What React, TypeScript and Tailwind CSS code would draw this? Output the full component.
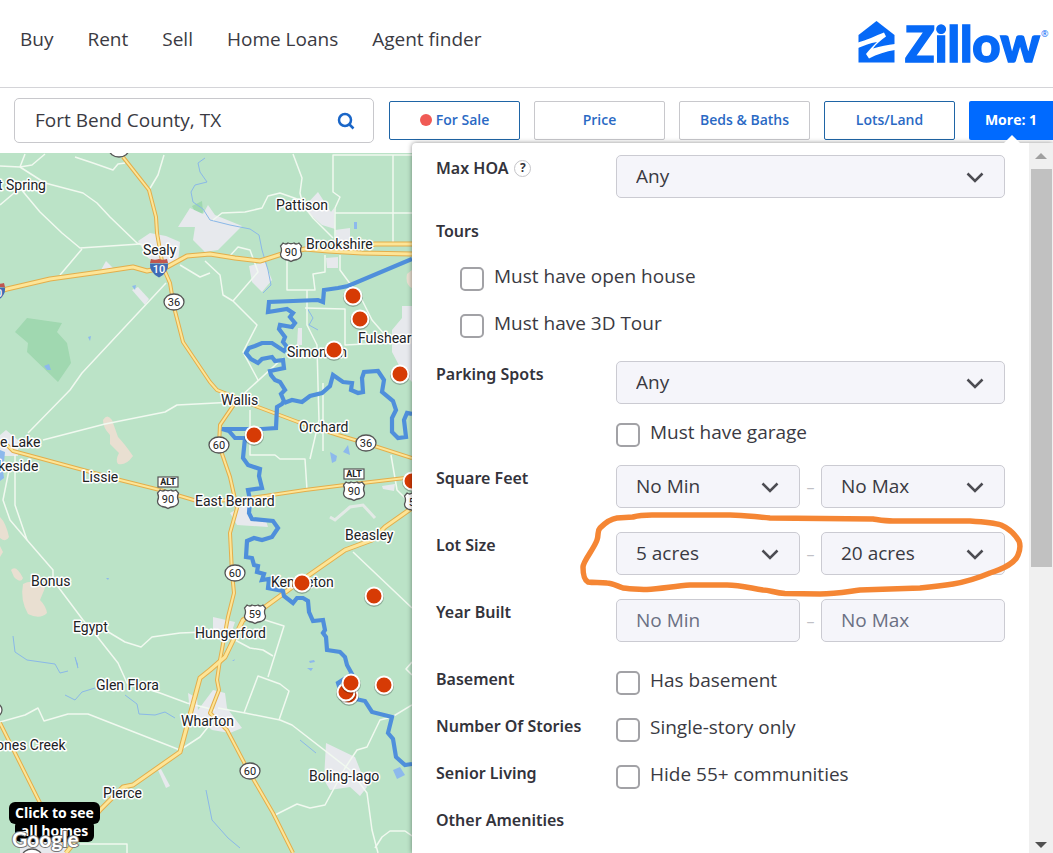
import { ReactNode, useState } from "react";
import clsx from "clsx";

const NAV_LINKS = ["Buy", "Rent", "Sell", "Home Loans", "Agent finder"];

const HIGHWAYS = [
  "M0 291 L7 289 L50 279 L100 272 L133 267 L147 271 L167 267 L187 256 L210 254 L235 258 L260 261 L282 254 L305 249 L328 251 L362 253 L412 254",
  "M350 250 L375 244 L412 244",
  "M412 508 L385 527 L372 540 L345 550 L302 580 L265 607 L243 620 L225 657 L210 670 L200 678 L180 752 L133 785 L123 787 L100 810 L66 853",
];

const ROADS = [
  "M123 157 L149 190 L156 217 L157 233 L163 267 L170 283 L174 307 L183 342 L210 382 L217 390 L237 398 L258 407 L298 422 L338 435 L365 443 L412 458",
  "M235 403 L220 425 L219 445 L230 477 L237 508 L230 533 L232 573 L234 593 L228 617 L220 660 L217 680 L219 690 L210 713 L227 730 L248 770 L273 813 L293 853",
  "M7 445 L13 451 L120 480 L160 490 L197 501 L235 500 L265 496 L305 490 L345 485 L405 478",
  "M0 723 L40 803 L65 845",
];

const STREETS = [
  "M0 166 L20 167 L45 183 L83 193 L97 203 L110 217 L137 243 L155 249",
  "M20 167 L25 154 M20 167 L32 165 L45 154 M75 157 L93 163 L113 170 L118 164 L125 163",
  "M0 205 L20 188 L40 212 L62 233 L80 248 L140 244 M82 249 L60 275",
  "M164 155 L158 175 L149 190 M180 265 L200 277 L210 273",
  "M166 283 L82 373 L70 390 L28 433",
  "M293 154 L302 178 L300 193 L303 205 L313 218 L333 238",
  "M213 220 L222 213 L245 212 L262 208 L268 196 L280 193 L300 200",
  "M412 155 L333 155 L333 192 L340 197 L335 208 L335 240 M335 213 L412 213 M393 155 L393 243",
  "M287 258 L287 290 L313 290 M325 255 L325 272 L313 274 L315 290 L307 290 L307 325 L317 345 L318 385 L319 420 L310 459",
  "M340 255 L340 270 L362 300 L372 320 L385 335 M305 308 L345 309 L345 345 L384 343",
  "M205 261 L220 275 L223 295 L233 301 L257 325 L243 352 L258 380",
  "M233 301 L258 272 L250 250 L238 247 L228 258 M283 358 L250 388 L237 400",
  "M43 440 L105 424 L165 412 L177 405 L235 402",
  "M9 470 L3 500 L10 520 L27 540 L53 570 L53 580 L83 620 L92 630 L118 663 L127 683 L160 693 L187 703 L215 710",
  "M15 455 L15 505 L27 540",
  "M105 630 L125 642 L141 647 L152 637 L180 633 L205 632",
  "M0 722 L25 715 L38 708 L44 721 L68 714 L88 714 L180 750 L200 737 L212 722",
  "M250 410 L250 455 L275 455 L280 459 L305 459 L307 490 M323 383 L323 451",
  "M353 552 L412 608 M391 455 L397 490 L412 505",
  "M235 640 L250 648 L263 650 L273 656 M265 620 L284 626 L268 677",
  "M244 713 L258 676 L280 684 L289 691 L279 720",
  "M218 708 L245 713 L280 720 L292 725 L350 770 L367 793 L372 830 L378 853",
  "M412 705 L392 717 L380 720 L367 747 L357 750 L345 768 L325 805 L310 808 L297 804 L275 815",
  "M375 848 L382 837 L390 831 L405 831 L412 836 M80 844 L127 844 L127 853 M412 662 L406 669 L412 675",
];

const RIVERS = [
  "M205 158 L198 163 L200 172 L207 182 L195 185 L191 192 L193 202 L203 209 L210 220 L230 225 L250 229 L259 235 L262 250 L268 270 L271 285 L263 293",
  "M13 636 L15 652 L27 660 L55 664 L60 673 L68 671 M75 657 L78 668 M65 695 L75 700 L82 692 L95 688 M125 695 L137 704 L139 714 L155 715 L165 712 L175 718",
  "M307 308 L313 318 L309 325 L318 330 M206 790 L212 820 L228 838 L240 848 M300 740 L316 753",
];

const TOWNS = [
  "178,227 190,208 203,214 208,205 215,215 242,226 218,250 205,252 193,240 195,227",
  "138,241 150,233 166,236 180,242 178,262 160,264 148,258",
  "101,270 106,261 113,268",
  "132,290 138,287 149,299 145,305",
  "303,208 318,192 331,212 334,208 335,229 322,225",
  "335,230 350,228 350,240 337,242",
  "326,258 338,257 338,268 327,268",
  "249,266 265,262 272,280 262,292 252,282",
  "298,328 302,328 302,345 297,345",
  "392,330 402,318 402,306 412,306 412,382 402,371 392,352",
  "230,513 247,504 254,518 266,521 268,527 237,525",
  "213,617 235,622 230,637 213,633",
  "188,693 197,698 198,710 213,690 225,693 227,708 242,728 230,733 212,730 190,712",
  "326,743 355,757 367,787 360,796 350,787 330,790 324,780",
  "158,770 161,769 170,786 166,788",
  "0,435 6,430 18,440 18,456 0,456",
  "20,835 60,840 70,853 20,853",
  "382,486 395,484 394,491 383,489",
];

const LABELS: [string, number, number][] = [
  ["t Spring", -2, 190],
  ["Pattison", 276, 210],
  ["Brookshire", 306, 249],
  ["Sealy", 143, 255],
  ["Simonton", 287, 357],
  ["Fulshear", 358, 343],
  ["Wallis", 221, 405],
  ["Orchard", 299, 432],
  ["e Lake", 0, 447],
  ["keside", -2, 471],
  ["Lissie", 82, 482],
  ["East Bernard", 195, 506],
  ["Beasley", 345, 540],
  ["Kendleton", 271, 587],
  ["Bonus", 31, 586],
  ["Egypt", 73, 632],
  ["Hungerford", 195, 638],
  ["Glen Flora", 96, 690],
  ["Wharton", 181, 726],
  ["ones Creek", -4, 750],
  ["Pierce", 103, 798],
  ["Boling-Iago", 309, 781],
];

const PINS = [
  [353, 296],
  [360, 319],
  [334, 350],
  [400, 374],
  [254, 435],
  [412, 481],
  [302, 583],
  [374, 596],
  [384, 685],
  [349, 695],
  [346, 692],
  [351, 683],
];

function StateShield({ x, y, label }: { x: number; y: number; label?: string }) {
  return (
    <g>
      <ellipse cx={x} cy={y} rx="10" ry="8" fill="#fff" stroke="#555" strokeWidth="1.3" />
      <text x={x} y={y + 4} fontSize="11" textAnchor="middle">{label}</text>
    </g>
  );
}

function UsShield({ x, y, label, alt }: { x: number; y: number; label: string; alt?: boolean }) {
  return (
    <g>
      {alt && (
        <>
          <rect x={x - 10} y={y - 22} width="20" height="10" fill="#fff" stroke="#555" strokeWidth="1.2" />
          <text x={x} y={y - 14} fontSize="9" fontWeight="700" textAnchor="middle">ALT</text>
        </>
      )}
      <path
        transform={`translate(${x} ${y})`}
        d="M-8 -9 Q-5 -7 -3 -9 Q0 -7.500 3 -9 Q5 -7 8 -9 L10.500 -6 Q8.500 -2 10.500 2 Q10.500 6 6 7.500 Q2 8 0 9.500 Q-2 8 -6 7.500 Q-10.500 6 -10.500 2 Q-8.500 -2 -10.500 -6 Z"
        fill="#fff"
        stroke="#555"
        strokeWidth="1.3"
      />
      <text x={x} y={y + 4} fontSize="11" textAnchor="middle">{label}</text>
    </g>
  );
}

function InterstateShield({ x, y }: { x: number; y: number }) {
  return (
    <g transform={`translate(${x} ${y})`}>
      <path d="M-8 -9 Q-4 -7.500 0 -9 Q4 -7.500 8 -9 L9 -5 H-9 Z" fill="#c0564f" />
      <path d="M-9 -4.500 H9 Q10 4 0 9.500 Q-10 4 -9 -4.500 Z" fill="#3f6bb5" />
      <text y="5" fontSize="11" fontWeight="500" textAnchor="middle" className="fill-white">10</text>
    </g>
  );
}

function MapView() {
  return (
    <svg
      viewBox="0 153 412 700"
      preserveAspectRatio="xMinYMin slice"
      className="size-full font-[Roboto,sans-serif]"
      fill="none"
      role="img"
      aria-label="Map of Fort Bend County"
    >
      <rect y="153" width="412" height="700" fill="#bbe3c7" />
      <polygon points="27,318 48,321 62,323 57,332 67,343 71,363 58,382 27,352 28,343 15,332" fill="#a0d8b0" />
      <polygon points="192,206 202,201 203,212 198,218" fill="#a0d8b0" />
      <g fill="#e9dfd1">
        <path d="M103 420 Q107 413 112 420 L118 437 Q124 443 133 456 Q126 466 118 464 Q115 460 119 453 L110 444 L110 435 Q103 428 103 420Z" />
        <path d="M11 570 Q16 564 23 578 Q21 584 14 577Z M23 584 Q34 578 45 588 L40 600 Q46 606 47 613 Q40 620 28 614 Q20 600 23 584Z" />
        <path d="M0 517 Q6 523 9 537 Q6 543 0 538Z M0 546 L3 552 L0 557Z M407 274 Q412 270 412 270 V288 Q405 285 407 274Z" />
      </g>
      <g fill="#e7e9ed">
        {TOWNS.map((points) => (
          <polygon key={points} points={points} />
        ))}
      </g>
      <g fill="#8db9ec">
        <path d="M0 450 L5 452 L4 462 L2 464 L4 478 L0 481Z" />
        <path d="M330 452 L337 456 L336 461 L332 463Z M343 452 L348 445 L350 455Z M354 222 H357 V229 H354Z" />
        <path d="M44 366 L49 364 L51 370 L47 370Z M88 337 L91 336 L90 341Z M132 286 L136 285 L135 290Z M393 770 L400 767 L405 775 L397 779Z" />
        <path d="M309 661 L314 660 L315 662 L310 663Z M307 668 L313 668 L311 671Z M106 578 L109 578 L108 580Z M75 657 L78 664 L78 669Z M232 661 L235 659 L234 661Z" />
      </g>
      <g stroke="#8ab8e8" strokeWidth="1">
        {RIVERS.map((d) => (
          <path key={d} d={d} />
        ))}
      </g>
      <g stroke="#f1f9f0" strokeWidth="1.500" strokeLinejoin="round">
        {STREETS.map((d) => (
          <path key={d} d={d} />
        ))}
      </g>
      <path d="M330 517 L335 520 L350 507 L363 505 L375 518" stroke="#e3eae6" strokeWidth="3" />

      <g stroke="#e3ae4b" strokeLinejoin="round">
        {ROADS.map((d) => (
          <path key={d} d={d} strokeWidth="4" />
        ))}
        {HIGHWAYS.map((d) => (
          <path key={d} d={d} strokeWidth="5" />
        ))}
      </g>
      <g stroke="#fde597" strokeLinejoin="round">
        {ROADS.map((d) => (
          <path key={d} d={d} strokeWidth="2" />
        ))}
        {HIGHWAYS.map((d) => (
          <path key={d} d={d} strokeWidth="3" />
        ))}
      </g>

      {/* county boundary */}
      <g stroke="#4f8fdb" strokeWidth="4.200" strokeLinejoin="miter">
        <path d="M412 259 L348 286 L338 288 L324 290 L323 302 L318 300 L269 302 L268 312 L287 309 L293 313 L290 317 L295 323 L292 327 L280 325 L279 329 L285 337 L283 342 L287 347 L284 351 L272 343 L262 343 L255 346 L249 348 L246 353 L251 359 L258 363 L262 359 L272 357 L275 361 L283 360 L284 368 L270 371 L271 375 L275 380 L280 382 L285 390 L281 394 L284 401 L282 404 L277 407 L276 428 L262 429 L222 429 L229 431 L235 438 L245 438 L243 458 L248 465 L260 469 L259 476 L262 488 L248 490 L250 500 L249 513 L252 519 L273 521 L278 528 L272 537 L262 540 L254 538 L247 541 L246 557 L252 558 L254 565 L258 566 L257 572 L264 574 L262 580 L269 579 L268 588 L283 591 L284 596 L293 603 L297 598 L303 598 L308 601 L309 612 L313 621 L323 620 L325 630 L323 633 L326 637 L327 650 L340 652 L345 657 L347 665 L352 674 L338 683 L342 696 L365 701 L372 712 L392 717 L388 733 L393 739 L396 757 L405 765 L412 764" />
        <path d="M284 403 L292 400 L302 402 L310 396 L322 393 L330 386 L333 375 L343 382 L352 383 L351 390 L358 393 L363 392 L362 378 L364 372 L378 371 L384 380 L382 392 L393 401 L396 410 L392 418 L392 432 L398 438 L406 437 L404 420 L407 413 L412 414" />
      </g>

      <g fill="#222" className="font-[Roboto,sans-serif]">
        <InterstateShield x={159} y={268} />
        <InterstateShield x={-4} y={292} />
        <StateShield x={119} y={149} />
        <StateShield x={174} y={302} label="36" />
        <StateShield x={219} y={445} label="60" />
        <StateShield x={366} y={443} label="36" />
        <StateShield x={235} y={573} label="60" />
        <StateShield x={250} y={771} label="60" />
        <StateShield x={-8} y={710} />
        <StateShield x={32} y={857} />
        <UsShield x={291} y={252} label="90" />
        <UsShield x={168} y={499} label="90" alt />
        <UsShield x={354} y={491} label="90" alt />
        <UsShield x={255} y={614} label="59" />
        <UsShield x={415} y={502} label="59" />
      </g>

      <g fill="#202124" stroke="#fff" strokeWidth="3" strokeLinejoin="round" fontSize="14" paintOrder="stroke">
        {LABELS.map(([name, x, y]) => (
          <text key={name} x={x} y={y}>{name}</text>
        ))}
      </g>

      {PINS.map(([x, y]) => (
        <g key={`${x}-${y}`}>
          <circle cx={x} cy={y + 1} r="10" fill="#000" opacity=".25" />
          <circle cx={x} cy={y} r="8.500" fill="#d63b05" stroke="#fff" strokeWidth="2" />
        </g>
      ))}
    </svg>
  );
}

function ZillowLogo() {
  return (
    <a href="#" aria-label="Zillow home">
      <svg width="194" height="48" viewBox="857 18 194 48" fill="#0669f7" className="overflow-visible">
        <path d="M858.500 35 L876.500 21 L894.500 35 V62.500 H858.500 Z" />
        <path
          d="M858 42.500 C866 40.500 876 35.500 884 32.500 L886 36.500 C881 40 876 44 873 48.500 C880 46 888 45 895 44 V50 C886 51.500 877 54 869 58.500 L866 54 C869 50 873 46 877 42 C870 43 864 45.500 858 48 Z"
          fill="#fff"
        />
        <text
          x="905"
          y="62"
          fontSize="49"
          fontWeight="900"
          fontFamily="Lato, sans-serif"
          stroke="#0669f7"
          strokeWidth="1.500"
        >
          Zillow
        </text>
        <text x="1041" y="37" fontSize="9" fontFamily="Open Sans, sans-serif">®</text>
      </svg>
    </a>
  );
}

function FilterButton({ children, outlined }: { children: ReactNode; outlined?: boolean }) {
  return (
    <button
      type="button"
      className={clsx(
        "flex h-[39px] w-[131px] shrink-0 items-center justify-center gap-1 rounded-xs border bg-white pb-[2px] text-sm font-semibold text-[#2a69c4]",
        outlined ? "border-[#1f65a6]" : "border-[#c8c8cc]"
      )}
    >
      {children}
    </button>
  );
}

function Select({ label, value }: { label: string; value: string }) {
  return (
    <div className="relative flex-1">
      <select
        aria-label={label}
        className="h-[43px] w-full appearance-none rounded-[5px] border border-[#cbcbd2] bg-[#f5f5fa] px-[19px] text-[#3a3a42]"
      >
        <option>{value}</option>
      </select>
      <svg
        viewBox="0 0 18 12"
        fill="none"
        stroke="#4c4c52"
        strokeWidth="2.500"
        className="pointer-events-none absolute top-[17px] right-[21px] h-3 w-[18px]"
      >
        <path d="M1.500 1.500 L9 9 L16.500 1.500" />
      </svg>
    </div>
  );
}

function YearInput({ label, placeholder }: { label: string; placeholder: string }) {
  return (
    <input
      type="text"
      aria-label={label}
      placeholder={placeholder}
      className="h-[43px] w-full min-w-0 flex-1 rounded-[5px] border border-[#cbcbd2] bg-[#f5f5fa] px-[19px] pb-[2px] placeholder:text-[#6b7083]"
    />
  );
}

function Checkbox({ label }: { label: string }) {
  const [checked, setChecked] = useState(false);

  return (
    <label className="mb-[18px] flex h-[29px] items-end gap-[10px] text-[#3a3a42]">
      <input
        type="checkbox"
        checked={checked}
        onChange={() => setChecked(!checked)}
        className="size-6 shrink-0 appearance-none rounded-[5px] border-2 border-[#a2a2a6] bg-white checked:bg-[#006aff]"
      />
      <span className="h-full leading-[29px]">{label}</span>
    </label>
  );
}

function FilterRow({ title, children }: { title: ReactNode; children?: ReactNode }) {
  return (
    <div className="grid grid-cols-[180px_1fr]">
      <h3 className="flex h-[26px] items-center gap-[6px] font-['Noto_Sans',sans-serif] text-base font-semibold text-[#33333b]">
        {title}
      </h3>
      <div>{children}</div>
    </div>
  );
}

function Range({ children }: { children: [ReactNode, ReactNode] }) {
  return (
    <div className="mb-6 flex items-center">
      {children[0]}
      <span className="w-[21px] text-center text-base text-[#c0c0c6]">–</span>
      {children[1]}
    </div>
  );
}

function MorePanel() {
  return (
    <section className="z-10 -mt-[10px] flex w-[641px] shrink-0 rounded-tl-sm bg-white text-[19px] shadow-[0_0_5px_rgba(0,0,0,0.45)]">
      <div className="min-w-0 flex-1 overflow-hidden px-6 pt-3">
        <FilterRow
          title={
            <>
              Max HOA
              <button
                type="button"
                aria-label="About HOA fees"
                className="flex size-[17px] items-center justify-center rounded-full border border-[#c4c4c8] text-xs font-bold"
              >
                ?
              </button>
            </>
          }
        >
          <div className="mb-5 flex">
            <Select label="Max HOA" value="Any" />
          </div>
        </FilterRow>

        <FilterRow title="Tours" />
        <div className="mt-[18px] pb-[5px] pl-6">
          <Checkbox label="Must have open house" />
          <Checkbox label="Must have 3D Tour" />
        </div>

        <FilterRow title="Parking Spots">
          <div className="mb-[14px] flex">
            <Select label="Parking spots" value="Any" />
          </div>
          <Checkbox label="Must have garage" />
        </FilterRow>

        <FilterRow title="Square Feet">
          <Range>
            <Select label="Minimum square feet" value="No Min" />
            <Select label="Maximum square feet" value="No Max" />
          </Range>
        </FilterRow>

        <FilterRow title="Lot Size">
          <div className="relative">
            <Range>
              <Select label="Minimum lot size" value="5 acres" />
              <Select label="Maximum lot size" value="20 acres" />
            </Range>
            <svg
              viewBox="578 510 448 88"
              fill="none"
              stroke="#f58634"
              strokeWidth="5.500"
              strokeLinejoin="round"
              strokeLinecap="round"
              className="pointer-events-none absolute -top-[22px] -left-[38px] h-[88px] w-[448px]"
            >
              <path d="M633 517 C640 515 645 515 652 515 L730 515 C745 515 755 517 770 518 L873 519 C880 520 885 521 893 521 L970 521 C985 522 995 523 1001 525 C1010 529 1016 536 1019 541 C1021 546 1020 550 1018 555 C1015 563 1005 568 990 573 C978 578 965 582 953 584 C940 586 930 587 920 588 L860 590 C845 592 835 594 820 594 L785 593.500 C775 593 770 590 763 590 C750 588 740 585 727 585 L690 585 C675 586 660 589 647 589.500 C637 589 630 589 623 588 C617 586 612 583 607 583 C600 582 594 583 588 582 C584 580 583 575 583 567 C583 561 594 549 597 540 C599 534 597 531 600 528 C604 524 610 519 617 518 L633 517" />
            </svg>
          </div>
        </FilterRow>

        <FilterRow title="Year Built">
          <Range>
            <YearInput label="Earliest year built" placeholder="No Min" />
            <YearInput label="Latest year built" placeholder="No Max" />
          </Range>
        </FilterRow>

        <FilterRow title="Basement">
          <Checkbox label="Has basement" />
        </FilterRow>
        <FilterRow title="Number Of Stories">
          <Checkbox label="Single-story only" />
        </FilterRow>
        <FilterRow title="Senior Living">
          <Checkbox label="Hide 55+ communities" />
        </FilterRow>
        <FilterRow title="Other Amenities" />
      </div>

      {/* scrollbar */}
      <div className="flex w-6 flex-col items-center bg-[#f0f0f0]">
        <svg viewBox="0 0 12 6" className="my-[10px] h-[6px] w-3" fill="#a0a0a0">
          <path d="M0 6 L6 0 L12 6Z" />
        </svg>
        <div className="h-[398px] w-[21px] bg-[#c1c1c1]" />
        <svg viewBox="0 0 12 6" className="mt-auto mb-[5px] h-[6px] w-3 shrink-0" fill="#505050">
          <path d="M0 0 L6 6 L12 0Z" />
        </svg>
      </div>
    </section>
  );
}

export default function App() {
  const [search, setSearch] = useState("Fort Bend County, TX");

  return (
    <div className="flex h-screen flex-col overflow-hidden bg-white font-['Open_Sans',sans-serif] text-[#3a3a42]">
      <header className="flex h-[88px] shrink-0 items-start justify-between border-b border-[#d4d4d8] pr-[2px] pl-5">
        <nav className="flex gap-[34px] pt-[25px] text-[19px]">
          {NAV_LINKS.map((link) => (
            <a key={link} href="#">
              {link}
            </a>
          ))}
        </nav>
        <div className="pt-[18px]">
          <ZillowLogo />
        </div>
      </header>

      <div className="flex h-[65px] shrink-0 items-start gap-[15px] pl-[14px]">
        <form className="mt-[10px] flex h-[45px] min-w-0 flex-1 items-center rounded-[5px] border border-[#c8c8cc] pr-[18px] pl-5">
          <input
            type="text"
            aria-label="Search location"
            value={search}
            onChange={(e) => setSearch(e.target.value)}
            className="min-w-0 flex-1 text-[19px] outline-none"
          />
          <button type="button" aria-label="Search">
            <svg viewBox="0 0 18 18" fill="none" stroke="#1a66c8" strokeWidth="2.500" className="size-[18px]">
              <circle cx="8" cy="8" r="6" />
              <path d="M12.500 12.500 L16.500 16.500" />
            </svg>
          </button>
        </form>

        <div className="mt-[13px] flex gap-[14px]">
          <FilterButton outlined>
            <span className="size-3 rounded-full bg-[#f05a55]" />
            For Sale
          </FilterButton>
          <FilterButton>Price</FilterButton>
          <FilterButton>Beds &amp; Baths</FilterButton>
          <FilterButton outlined>Lots/Land</FilterButton>
          <button
            type="button"
            className="relative z-20 flex h-[39px] w-[84px] items-center justify-center rounded-l-xs bg-[#006aff] pb-[2px] text-sm font-bold text-white"
          >
            More: 1
            <svg viewBox="0 0 18 9" className="absolute -bottom-[4px] left-[34px] h-[9px] w-[18px]" fill="#fff">
              <path d="M0 9 L9 0 L18 9Z" />
            </svg>
          </button>
        </div>
      </div>

      <main className="flex min-h-0 flex-1">
        <div className="relative min-w-0 flex-1 overflow-hidden">
          <MapView />
          <button
            type="button"
            className="absolute bottom-[11px] left-[9px] flex flex-col items-center text-sm leading-[18px] font-bold text-white"
          >
            <span className="rounded-md bg-black px-[6px] py-[2px]">Click to see</span>
            <span className="-mt-[4px] rounded-md bg-black px-[6px] py-[2px]">all homes</span>
          </button>
          <svg className="absolute bottom-0 left-[10px] h-6 w-[74px]" viewBox="0 0 74 24">
            <text
              x="2"
              y="18"
              fontSize="21"
              fontWeight="700"
              fontFamily="Lato, sans-serif"
              fill="#fff"
              stroke="#777"
              strokeWidth="2"
              paintOrder="stroke"
            >
              Google
            </text>
          </svg>
        </div>
        <MorePanel />
      </main>
    </div>
  );
}
